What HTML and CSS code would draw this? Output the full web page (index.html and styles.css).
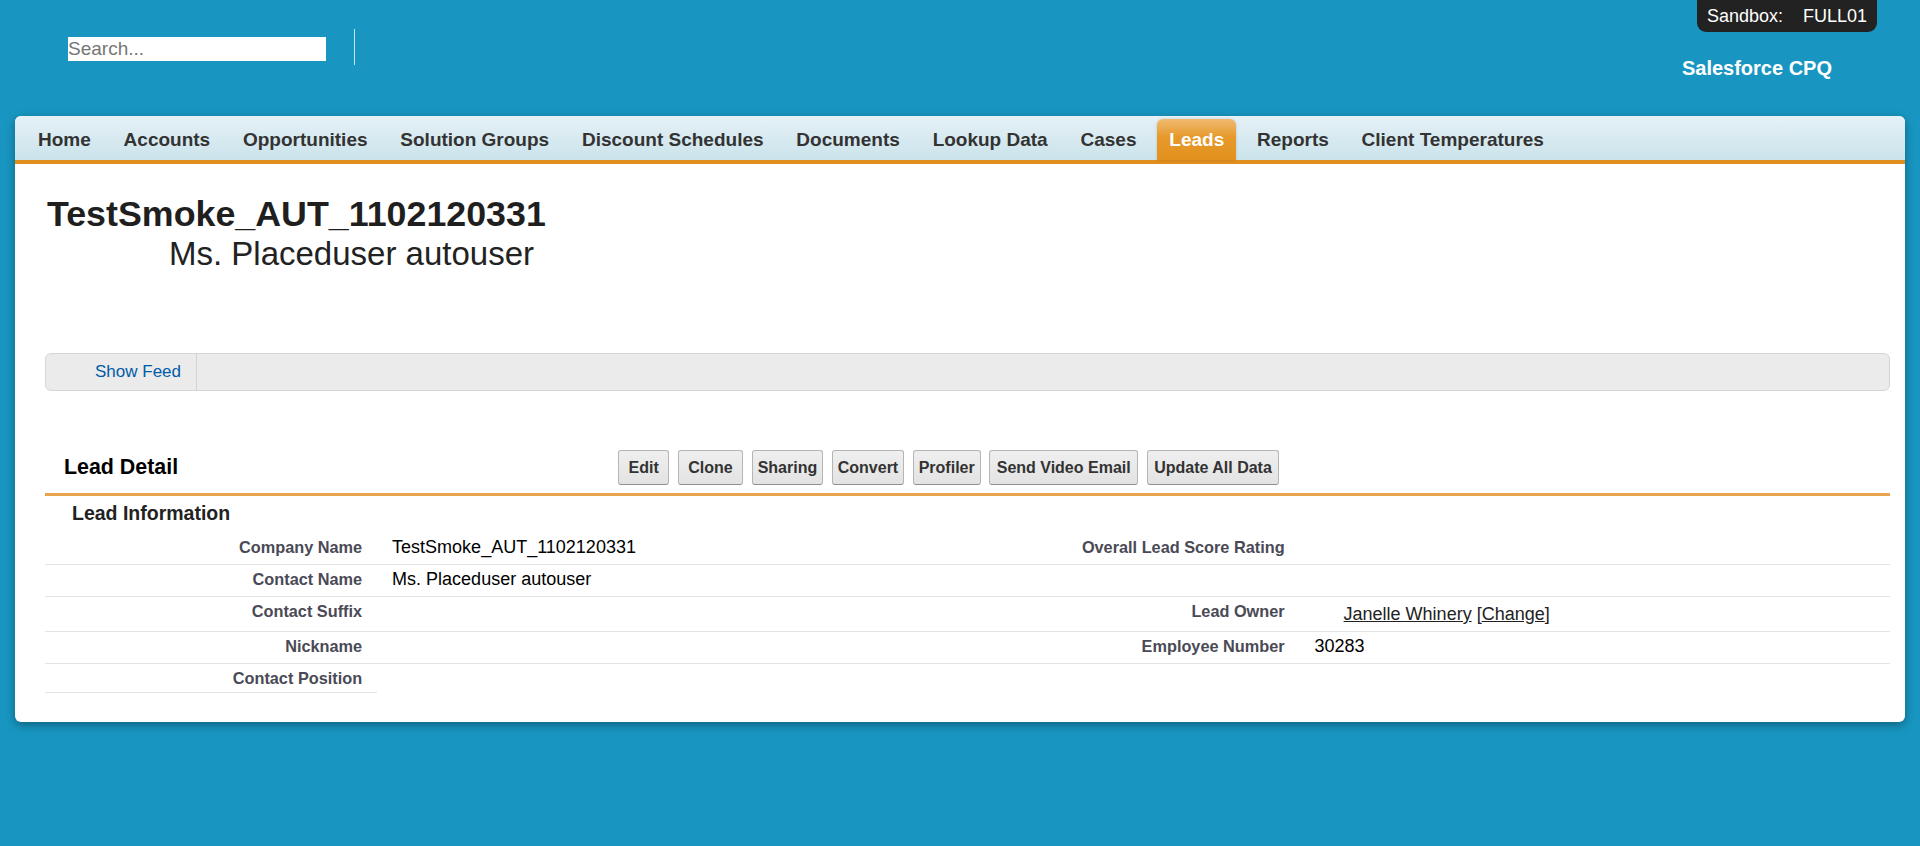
FILE: index.html
```html
<!DOCTYPE html>
<html lang="en">
<head>
<meta charset="utf-8">
<title>Lead: TestSmoke_AUT_1102120331</title>
<link rel="stylesheet" href="styles.css">
</head>
<body>
<header class="top">
  <div class="search-area">
    <input class="search" type="text" placeholder="Search...">
    <span class="divider"></span>
  </div>
  <div class="brand">Salesforce CPQ</div>
  <div class="sandbox">Sandbox: <span class="org">FULL01</span></div>
</header>

<div class="app">
  <nav class="tabs">
    <a class="tab">Home</a>
    <a class="tab">Accounts</a>
    <a class="tab">Opportunities</a>
    <a class="tab">Solution Groups</a>
    <a class="tab">Discount Schedules</a>
    <a class="tab">Documents</a>
    <a class="tab">Lookup Data</a>
    <a class="tab">Cases</a>
    <a class="tab active">Leads</a>
    <a class="tab">Reports</a>
    <a class="tab">Client Temperatures</a>
  </nav>

  <main class="content">
    <div class="page-title">
      <h1 class="record">TestSmoke_AUT_1102120331</h1>
      <h2 class="record-sub">Ms. Placeduser autouser</h2>
    </div>

    <div class="feed-bar">
      <a class="feed-link">Show Feed</a>
    </div>

    <section class="detail">
      <div class="detail-head">
        <h2 class="detail-title">Lead Detail</h2>
        <div class="buttons">
          <button class="btn btn-wide">Edit</button>
          <button class="btn btn-wide">Clone</button>
          <button class="btn">Sharing</button>
          <button class="btn">Convert</button>
          <button class="btn">Profiler</button>
          <button class="btn btn-long">Send Video Email</button>
          <button class="btn btn-long">Update All Data</button>
        </div>
      </div>

      <h3 class="section-title">Lead Information</h3>

      <div class="fields">
        <div class="label">Company Name</div>
        <div class="value">TestSmoke_AUT_1102120331</div>
        <div class="label">Overall Lead Score Rating</div>
        <div class="value"></div>

        <div class="label">Contact Name</div>
        <div class="value">Ms. Placeduser autouser</div>
        <div class="label"></div>
        <div class="value"></div>

        <div class="label">Contact Suffix</div>
        <div class="value"></div>
        <div class="label">Lead Owner</div>
        <div class="value"><span class="owner"><a class="link">Janelle Whinery</a> [<a class="link">Change</a>]</span></div>

        <div class="label">Nickname</div>
        <div class="value"></div>
        <div class="label">Employee Number</div>
        <div class="value">30283</div>

        <div class="label">Contact Position</div>
        <div class="value empty"></div>
        <div class="label empty"></div>
        <div class="value empty"></div>
      </div>
    </section>
  </main>
</div>
</body>
</html>
```

FILE: styles.css
```css
* { box-sizing: border-box; }

html, body {
  margin: 0;
  padding: 0;
}

body {
  background: #1896c1;
  font-family: "Liberation Sans", Arial, sans-serif;
  color: #222;
  height: 846px;
  overflow: hidden;
}

/* ---------- top header ---------- */
.top {
  position: relative;
  height: 116px;
  display: flex;
  align-items: flex-start;
}

.search-area {
  display: flex;
  align-items: flex-start;
  margin-left: 68px;
  padding-top: 29px;
}

.search {
  margin-top: 8px;
  width: 258px;
  height: 24px;
  border: none;
  padding: 0;
  outline: none;
  background: #fff;
  font-family: "Liberation Sans", Arial, sans-serif;
  font-size: 19px;
  color: #333;
}
.search::placeholder { color: #767676; }

.divider {
  margin-left: 28px;
  width: 1px;
  height: 36px;
  background: rgba(255, 255, 255, 0.75);
}

.brand {
  margin-left: auto;
  margin-right: 88px;
  padding-top: 56px;
  font-size: 20px;
  line-height: 24px;
  font-weight: bold;
  color: #fff;
}

.sandbox {
  position: absolute;
  top: 0;
  right: 43px;
  height: 32px;
  padding: 0 10px;
  background: #222;
  border-radius: 0 0 9px 9px;
  color: #fff;
  font-size: 18px;
  line-height: 32px;
  white-space: nowrap;
}
.org { margin-left: 15px; }

/* ---------- app container ---------- */
.app {
  margin: 0 15px;
  background: #fff;
  border-radius: 6px;
  box-shadow: 0 3px 10px rgba(0, 0, 0, 0.35);
}

.tabs {
  display: flex;
  align-items: flex-end;
  gap: 8.8px;
  height: 48px;
  padding-left: 11px;
  background: linear-gradient(#e5f1f6, #cbe3eb);
  border-bottom: 4px solid #e08f1f;
  border-radius: 6px 6px 0 0;
}

.tab {
  display: block;
  height: 41px;
  line-height: 41px;
  padding: 0 12px;
  font-size: 19px;
  font-weight: bold;
  color: #333;
  white-space: nowrap;
}

.tab.active {
  color: #fff;
  background: linear-gradient(#f0ba70, #e6992a 45%, #e3911e);
  border-radius: 6px 6px 0 0;
  box-shadow: 0 0 3px rgba(0, 0, 0, 0.15);
}

/* ---------- content ---------- */
.content {
  padding: 30px 15px 29px 30px;
}

.page-title { padding-left: 2px; }

.record {
  margin: 0;
  font-size: 35.8px;
  line-height: 40px;
  font-weight: bold;
  color: #1f1f1f;
}

.record-sub {
  margin: 1px 0 0;
  padding-left: 122px;
  font-size: 33px;
  line-height: 38px;
  font-weight: normal;
  color: #222;
}

.feed-bar {
  margin-top: 80px;
  height: 38px;
  display: flex;
  background: #ebebeb;
  border: 1px solid #d6d6d6;
  border-radius: 6px;
}

.feed-link {
  display: flex;
  align-items: center;
  padding: 0 15px 0 49px;
  border-right: 1px solid #d3d3d3;
  font-size: 17px;
  color: #015ba7;
}

/* ---------- detail ---------- */
.detail { margin-top: 50px; }

.detail-head {
  display: flex;
  align-items: center;
  padding: 9px 0 8px;
  border-bottom: 3px solid #e8a54e;
}

.detail-title {
  width: 573px;
  margin: 0;
  padding-left: 19px;
  font-size: 21.4px;
  line-height: 25px;
  font-weight: bold;
  color: #000;
}

.buttons {
  display: flex;
  gap: 8.5px;
}

.btn {
  height: 35px;
  padding: 0 5px;
  font-family: "Liberation Sans", Arial, sans-serif;
  font-size: 16px;
  font-weight: bold;
  color: #333;
  background: linear-gradient(#efefef, #e3e3e3);
  border: 1px solid #b5b5b5;
  border-bottom-color: #8f8f8f;
  border-radius: 3px;
}
.btn-wide { padding: 0 9.5px; }
.btn-long { padding: 0 6.5px; }

.section-title {
  margin: 0;
  padding: 6px 0 9px 27px;
  font-size: 19.5px;
  line-height: 22px;
  font-weight: bold;
  color: #222;
}

.fields {
  display: grid;
  grid-template-columns: 18% 32% 18% 32%;
  grid-template-rows: 32px 32px 35px 32px 29px;
}

.label, .value {
  border-bottom: 1px solid #e4e4e4;
  padding-top: 4px;
  line-height: 20px;
}

.label {
  padding-right: 15px;
  text-align: right;
  font-size: 16.3px;
  font-weight: bold;
  color: #4a4a56;
}

.value {
  padding-left: 15px;
  font-size: 18px;
  color: #000;
}

.empty { border-bottom: none; }

.owner {
  display: inline-block;
  padding: 3px 0 0 29px;
  color: #222;
}

.link {
  color: #222;
  text-decoration: underline;
}
```
